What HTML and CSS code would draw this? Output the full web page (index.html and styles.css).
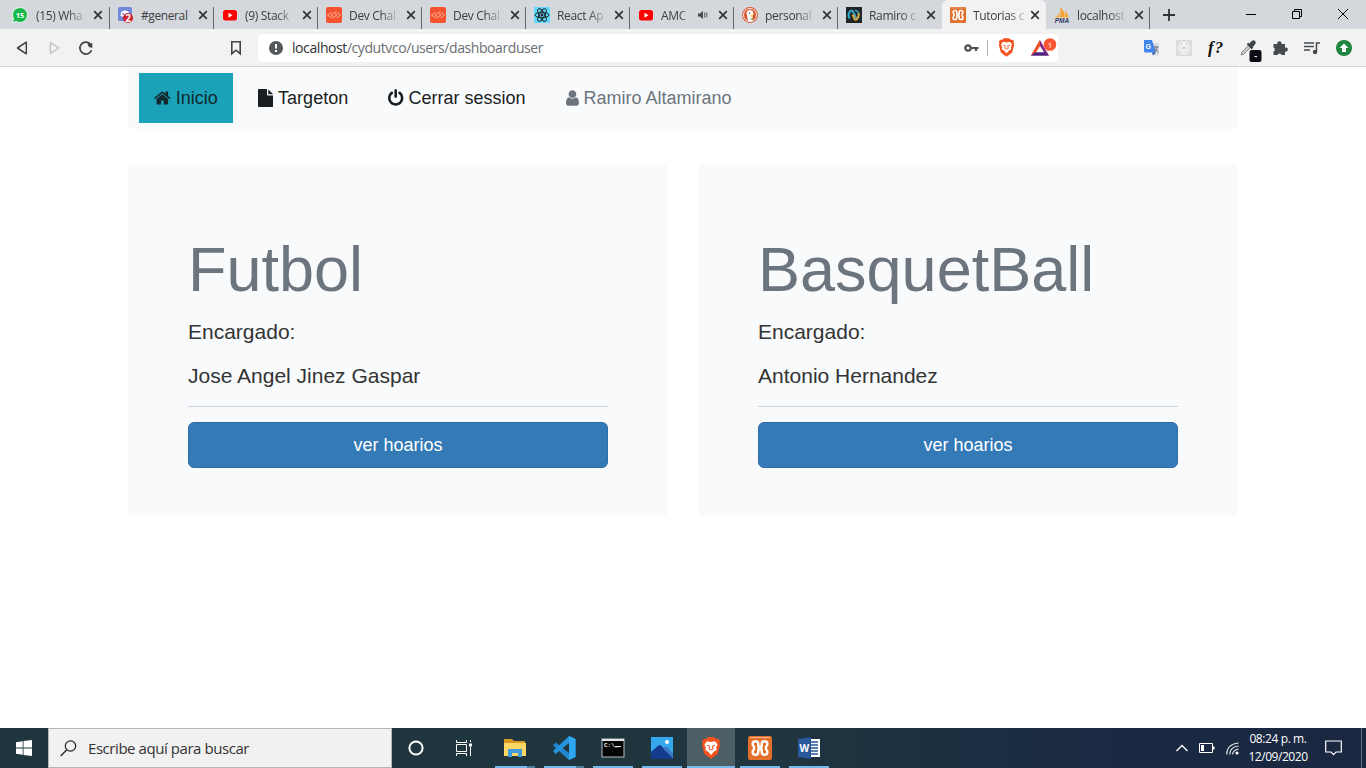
FILE: index.html
```html
<!DOCTYPE html>
<html lang="es">
<head>
<meta charset="utf-8">
<title>Tutorias</title>
<link rel="stylesheet" href="styles.css">
</head>
<body>
<svg class="defs" width="0" height="0">
  <symbol id="x" viewBox="0 0 10 10"><path d="M1.2 1.2l7.6 7.6M8.8 1.2L1.2 8.8" stroke="#303438" stroke-width="1.7" fill="none"/></symbol>
  <symbol id="yt" viewBox="0 0 16 16"><rect x="1" y="3" width="14" height="10.5" rx="2.5" fill="#f00"/><path d="M6.5 5.8v5l4-2.5z" fill="#fff"/></symbol>
  <symbol id="dev" viewBox="0 0 16 16"><rect width="16" height="16" rx="2" fill="#f7522f"/><path d="M5.500 5.200L1.500 8l4 2.800M10.500 5.200l4 2.800-4 2.800M10 4.800L5 8l2 1.300M6 11.200L11 8 9 6.700" stroke="#ffb49e" stroke-width=".9" fill="none"/></symbol>
  <symbol id="xampp" viewBox="0 0 24 24"><rect width="24" height="24" rx="2" fill="#e2702a"/><path d="M2 1.500h20" stroke="#f3b48c"/><path d="M10.300 10.800V8q0-2.700-2.800-2.700Q4.600 5.300 4.600 8q0 1.500 1.400 2.700v2.600q-1.400 1.200-1.400 2.700 0 2.700 2.900 2.700 2.800 0 2.800-2.700v-2.800h3.400V16q0 2.700 2.800 2.700 2.900 0 2.900-2.700 0-1.500-1.400-2.700v-2.600q1.400-1.200 1.400-2.700 0-2.700-2.900-2.700-2.800 0-2.800 2.700v2.800z" fill="none" stroke="#fff" stroke-width="2.400" stroke-linejoin="round"/></symbol>
  <symbol id="brave" viewBox="0 0 20 22"><path d="M5 2L7 0h6l2 2 2-.2L19 4l-.7 2 .7 2-2.400 9L10 22l-6.600-5L1 8l.7-2L1 4l2-2.200z" fill="#f4511e"/><path d="M3.500 7.500L6 4.200l4 .8 4-.8 2.500 3.300-1.300 3.200.4 2.300-2.800 1.700L10 18l-2.800-3.300L4.400 13l.4-2.300z" fill="#fff"/><path d="M5.800 8.300l2.700.7M14.200 8.300l-2.700.7M8.500 9l-.5 3 2 1 2-1-.5-3" stroke="#f4511e" stroke-width="1" fill="none"/></symbol>
</svg>

<header class="tabs">
  <div class="tab first"><svg class="fav" viewBox="0 0 16 16"><path d="M8 .5a7.500 7.500 0 1 1-3.800 14L.5 15.500l1-3.700A7.500 7.500 0 0 1 8 .5z" fill="#16b84a" stroke="#fff" stroke-width=".8"/><text x="8" y="11" class="wa">15</text></svg><span class="label">(15) Wha</span><svg class="close"><use href="#x"/></svg></div>
  <div class="tab"><svg class="fav" viewBox="0 0 16 16"><rect width="14" height="14" rx="1.500" fill="#7289da"/><path d="M2.500 9q0-4 2-5 2.500-.8 5 0 2 1 2 5-3 2-9 0z" fill="#fff"/><circle cx="5.200" cy="7" r="1" fill="#7289da"/><circle cx="10" cy="11" r="5" fill="#d3202c"/><text x="10" y="14.500" class="dc">2</text></svg><span class="label full">#general</span><svg class="close"><use href="#x"/></svg></div>
  <div class="tab"><svg class="fav"><use href="#yt"/></svg><span class="label">(9) Stack</span><svg class="close"><use href="#x"/></svg></div>
  <div class="tab"><svg class="fav"><use href="#dev"/></svg><span class="label">Dev Chal</span><svg class="close"><use href="#x"/></svg></div>
  <div class="tab"><svg class="fav"><use href="#dev"/></svg><span class="label">Dev Chal</span><svg class="close"><use href="#x"/></svg></div>
  <div class="tab"><svg class="fav" viewBox="0 0 16 16"><rect width="16" height="16" rx="1" fill="#61dafb"/><g fill="none" stroke="#20232a"><ellipse cx="8" cy="8" rx="7" ry="2.700"/><ellipse cx="8" cy="8" rx="7" ry="2.700" transform="rotate(60 8 8)"/><ellipse cx="8" cy="8" rx="7" ry="2.700" transform="rotate(120 8 8)"/></g><circle cx="8" cy="8" r="1.400" fill="#20232a"/></svg><span class="label">React Ap</span><svg class="close"><use href="#x"/></svg></div>
  <div class="tab"><svg class="fav"><use href="#yt"/></svg><span class="label short">AMC</span><svg class="sound" viewBox="0 0 10 10"><path d="M0 3.500h2L5 1v8L2 6.500H0z" fill="#454a4e"/><path d="M6.700 2.500v5M8.800 2.500v5" stroke="#454a4e" stroke-width=".9"/></svg><svg class="close"><use href="#x"/></svg></div>
  <div class="tab"><svg class="fav" viewBox="0 0 16 16"><circle cx="8" cy="8" r="7.900" fill="#d9532c"/><circle cx="8" cy="8" r="6.500" fill="none" stroke="#fff" stroke-width=".9"/><path d="M6 14L4.500 6Q5 3 8 3q3.500.5 3.500 4l-1 2 .5 5q-2.500 1-5 0z" fill="#fff"/><path d="M8 8.500l3.500-.8-.5 1.600-2 .5z" fill="#fbb829"/><path d="M8 12l3-1v2.500z" fill="#5fb24a"/><circle cx="7.500" cy="6.200" r=".7" fill="#335"/></svg><span class="label">personal</span><svg class="close"><use href="#x"/></svg></div>
  <div class="tab noline"><svg class="fav" viewBox="0 0 16 16"><rect width="16" height="16" fill="#1e2529"/><path d="M3.500 11.500Q1.500 8 3.500 5 5 2.500 7 4.500l3.500 7" stroke="#35a8c6" stroke-width="2" fill="none"/><path d="M6.500 7.500L8.500 12q1 1.500 2.500 0 2.500-3 1.500-6.500" stroke="#d9a63e" stroke-width="2" fill="none"/><path d="M9 3.500q3 0 3.500 3" stroke="#35a8c6" stroke-width="1.500" fill="none"/></svg><span class="label">Ramiro c</span><svg class="close"><use href="#x"/></svg></div>
  <div class="tab active"><svg class="fav"><use href="#xampp"/></svg><span class="label">Tutorias c</span><svg class="close"><use href="#x"/></svg></div>
  <div class="tab"><svg class="fav" viewBox="0 0 16 16"><path d="M2 10.500Q5 8 5.500 4v6zM6.500 10V0q4 4 4.500 10zM11 3q3 4 3.500 7.500L11.500 10z" fill="#f9a12e"/><path d="M1 10.500h14" stroke="#f5c888"/><text x="8" y="16" class="pma">PMA</text></svg><span class="label">localhost</span><svg class="close"><use href="#x"/></svg></div>
  <svg class="plus" viewBox="0 0 12 12"><path d="M6 0v12M0 6h12" stroke="#303438" stroke-width="1.800"/></svg>
  <div class="winctl">
    <svg viewBox="0 0 12 12"><path d="M1 6.500h10" stroke="#000"/></svg>
    <svg viewBox="0 0 12 12"><path d="M1.500 3.500h7v7h-7zM3.500 3.500v-2h7v7h-2" fill="none" stroke="#000"/></svg>
    <svg viewBox="0 0 12 12"><path d="M1 1l10 10M11 1L1 11" stroke="#000"/></svg>
  </div>
</header>

<div class="toolbar">
  <div class="navbtns">
    <svg viewBox="0 0 16 16"><path d="M12.300 2.200v11.600L3.500 8z" fill="none" stroke="#3f4347" stroke-width="1.500" stroke-linejoin="round"/></svg>
    <svg viewBox="0 0 16 16"><path d="M4.500 2.500v11L12.800 8z" fill="none" stroke="#bcbfc2" stroke-width="1.300" stroke-linejoin="round"/></svg>
    <svg viewBox="0 0 16 16"><path d="M13.500 10.300A6 6 0 1 1 12 3.700" fill="none" stroke="#3f4347" stroke-width="1.700"/><path d="M9.500 3.200h4.800v4.600q-4.500 0-4.800-4.600z" fill="#3f4347"/></svg>
  </div>
  <svg class="bookmark" viewBox="0 0 12 16"><path d="M1.800 1.700h8.400v12L6 10.200l-4.200 3.500z" fill="none" stroke="#3f4347" stroke-width="1.600"/></svg>
  <div class="address">
    <svg class="info" viewBox="0 0 14 14"><circle cx="7" cy="7" r="7" fill="#55585c"/><path d="M7 3v4.500M7 9v2" stroke="#fff" stroke-width="2"/></svg>
    <span class="url"><b>localhost</b>/cydutvco/users/dashboarduser</span>
    <svg class="key" viewBox="0 0 15 10"><circle cx="4" cy="5" r="2.700" fill="none" stroke="#4c5054" stroke-width="2.200"/><path d="M7 5h7.500M12 5v3" stroke="#4c5054" stroke-width="2.200"/></svg>
    <i class="vline"></i>
    <svg class="shield"><use href="#brave"/></svg>
    <svg class="bat" viewBox="0 0 26 20"><path d="M9 2l9 15.500H0z" fill="#8a2c82"/><path d="M9 2L0 17.500l5-3L9 8z" fill="#f4511e"/><path d="M0 17.500h18L13 14H5z" fill="#4b2484"/><path d="M9 8l4 6.200H5z" fill="#fff"/><circle cx="19" cy="6.500" r="6.300" fill="#fb5430"/><text x="19" y="9.500" class="one">1</text></svg>
  </div>
  <div class="ext">
    <svg viewBox="0 0 16 16"><path d="M7 3h8v12.500H9z" fill="#d9dcdf"/><path d="M0 0h8l4 12.500H1.500Q0 12.500 0 11z" fill="#4285e8"/><path d="M8 12.500h4l-3 3z" fill="#2d58b8"/><text x="1.500" y="9" class="gt">G</text><path d="M9.500 7h5M12 6v1M13.500 7q-1 4-3.500 5M11 8.500l3.500 4" stroke="#697580" fill="none"/></svg>
    <svg viewBox="0 0 16 16"><rect width="16" height="16" fill="#dcdddd"/><g fill="none" stroke="#f7f7f7"><ellipse cx="8" cy="8" rx="6.500" ry="2.600"/><ellipse cx="8" cy="8" rx="6.500" ry="2.600" transform="rotate(60 8 8)"/><ellipse cx="8" cy="8" rx="6.500" ry="2.600" transform="rotate(120 8 8)"/></g></svg>
    <span class="fq">f?</span>
    <svg viewBox="0 0 16 16"><path d="M1 15l1-3 7-7 2 2-7 7z" fill="#c6c8ca" stroke="#777" stroke-width=".8"/><path d="M7.500 3.500l5 5" stroke="#3f4347" stroke-width="2.400"/><path d="M9.500 4.500L12 1.800q1.500-1.300 2.500-.3 1.300 1.200-.3 2.700L11.800 6.800z" fill="#3f4347" stroke="#3f4347" stroke-width="1.500"/><rect x="9.500" y="10" width="12" height="12" rx="2" fill="#0c0c16"/><path d="M14.500 16.500h2.500" stroke="#fff"/></svg>
    <svg viewBox="0 0 16 16"><path d="M2 4h3.300a2.200 2.200 0 1 1 4.200 0H13v3.500a2.200 2.200 0 1 1 0 4.200V15H9.700a2.200 2.200 0 0 0-4.200 0H1.500v-3.600a2.200 2.200 0 0 0 0-4V4z" fill="#454a4e"/></svg>
    <svg viewBox="0 0 16 16"><path d="M0 3h10M0 6.500h10M0 10h6M12.500 12V3H16" stroke="#454a4e" stroke-width="1.500" fill="none"/><circle cx="11" cy="12" r="2.200" fill="#454a4e"/></svg>
    <svg viewBox="0 0 16 16"><circle cx="8" cy="8" r="8" fill="#1e8541"/><path d="M8 3.500L12.500 8H10v4H6V8H3.500z" fill="#fff"/></svg>
  </div>
</div>

<main class="page">
  <nav class="menu">
    <a class="item on"><svg class="i-home" viewBox="64 0 1664 1792"><path d="M1472 992v480q0 26-19 45t-45 19h-384v-384h-256v384h-384q-26 0-45-19t-19-45v-480q0-1 .5-3t.5-3l575-474 575 474q1 2 1 6zm223-69l-62 74q-8 9-21 11h-3q-13 0-21-7l-692-577-692 577q-12 8-24 7-13-2-21-11l-62-74q-8-10-7-23.500t11-21.500l719-599q32-26 76-26t76 26l244 204v-195q0-14 9-23t23-9h192q14 0 23 9t9 23v408l219 182q10 8 11 21.500t-7 23.500z"/></svg>Inicio</a>
    <a class="item"><svg class="i-file" viewBox="128 0 1536 1792"><path d="M1152 512v-472q22 14 36 28l408 408q14 14 28 36h-472zm-128 32q0 40 28 68t68 28h544v1056q0 40-28 68t-68 28h-1344q-40 0-68-28t-28-68v-1600q0-40 28-68t68-28h800v544z"/></svg>Targeton</a>
    <a class="item"><svg class="i-file" viewBox="128 0 1536 1792"><path d="M1664 896q0 156-61 298t-164 245-245 164-298 61-298-61-245-164-164-245-61-298q0-182 80.500-343t226.500-270q43-32 95.500-25t83.500 50q32 42 24.500 94.500t-49.500 84.500q-98 74-151.500 181t-53.500 228q0 104 40.500 198.500t109.500 163.500 163.500 109.500 198.500 40.500 198.500-40.500 163.500-109.500 109.500-163.500 40.500-198.500q0-121-53.500-228t-151.500-181q-42-32-49.500-84.500t24.500-94.500q31-43 84-50t95 25q146 109 226.500 270t80.500 343zm-640-768v640q0 52-38 90t-90 38-90-38-38-90v-640q0-52 38-90t90-38 90 38 38 90z"/></svg>Cerrar session</a>
    <a class="item muted"><svg class="i-user" viewBox="256 0 1280 1792"><path d="M1536 1399q0 109-62.500 187t-150.500 78h-854q-88 0-150.500-78t-62.500-187q0-85 8.500-160.500t31.500-152 58.500-131 94-89 134.500-34.500q131 128 313 128t313-128q76 0 134.500 34.500t94 89 58.500 131 31.500 152 8.500 160.500zm-256-887q0 159-112.500 271.500t-271.500 112.500-271.500-112.500-112.500-271.500 112.500-271.500 271.500-112.500 271.500 112.500 112.500 271.500z"/></svg>Ramiro Altamirano</a>
  </nav>
  <section class="cards">
    <article class="card"><h1>Futbol</h1><p>Encargado:</p><p>Jose Angel Jinez Gaspar</p><hr><a class="btn">ver hoarios</a></article>
    <article class="card"><h1>BasquetBall</h1><p>Encargado:</p><p>Antonio Hernandez</p><hr><a class="btn">ver hoarios</a></article>
  </section>
</main>

<footer class="taskbar">
  <div class="cell"><svg width="16" height="16" viewBox="0 0 16 16"><path d="M0 2.200l6.700-1v6.400H0zM7.500 1.100L16 0v7.600H7.500zM0 8.400h6.700v6.400L0 13.800zM7.500 8.400H16V16l-8.500-1.100z" fill="#fff"/></svg></div>
  <div class="search"><svg width="17" height="17" viewBox="0 0 17 17"><circle cx="10.500" cy="6" r="5.200" fill="none" stroke="#222" stroke-width="1.200"/><path d="M6.800 9.700L.7 16" stroke="#222" stroke-width="1.300"/></svg><span>Escribe aquí para buscar</span></div>
  <div class="cell"><svg width="16" height="16" viewBox="0 0 16 16"><circle cx="8" cy="8" r="6.600" fill="none" stroke="#fff" stroke-width="2"/></svg></div>
  <div class="cell"><svg width="16" height="16" viewBox="0 0 16 16"><path d="M.5 0v2.500h10V0M.5 4.500h10v7H.5zM.5 16v-2.500h10V16M14.500 0v2M14.500 7v9" fill="none" stroke="#fff"/><path d="M13 3.500h3v3h-3z" fill="#fff"/></svg></div>
  <div class="apps">
    <div class="app multi"><svg viewBox="0 0 24 24"><path d="M1 3h8l2 2h11v4H1z" fill="#d99a22"/><path d="M1 7h22v13H1z" fill="#ffd766"/><path d="M5 21v-8h14v8h-4v-4H9v4z" fill="#3f9bdc"/></svg></div>
    <div class="app multi"><svg viewBox="0 0 24 24"><path d="M17 0l6.500 3v18L17 24 1 9.500 3.500 6.500 17 17z" fill="#1f88d0"/><path d="M17 0v7L3.500 18 1 15z" fill="#2694de"/><path d="M17 0l6.500 3v18L17 24z" fill="#2fa8f0"/></svg></div>
    <div class="app"><svg viewBox="0 0 24 24"><rect x="1" y="3" width="22" height="18" fill="#050505" stroke="#b8bec0"/><path d="M1 4h22" stroke="#e4e6e8" stroke-width="2"/><text x="3" y="11" class="cmd">C:\_</text><path d="M14 10.500h6" stroke="#ddd"/></svg></div>
    <div class="app"><svg viewBox="0 0 24 24"><rect x="1" y="1" width="22" height="22" fill="#35a7ec"/><path d="M1 16L8.500 9.500q1.500-1 3 .5L23 22v1H1z" fill="#153c8c"/><path d="M13 12.500l2-1.500q1-.6 2 .3l6 6.200v5z" fill="#3b76c8"/><circle cx="17" cy="6" r="2" fill="#fff"/></svg></div>
    <div class="app current"><svg viewBox="0 0 24 24"><use href="#brave" x="2" y="0" width="20" height="24"/></svg></div>
    <div class="app"><svg><use href="#xampp"/></svg></div>
    <div class="app"><svg viewBox="0 0 24 24"><path d="M12 3h11v18H12z" fill="#fff"/><path d="M13 6h8M13 9h8M13 12h8M13 15h8M13 18h8" stroke="#2a569a" stroke-width="1.300"/><path d="M1 3l13-2v22L1 21z" fill="#2a569a"/><text x="2.500" y="16" class="w">W</text></svg></div>
  </div>
  <div class="tray">
    <svg width="12" height="8" viewBox="0 0 12 8"><path d="M.5 7L6 1.500 11.500 7" fill="none" stroke="#fff" stroke-width="1.300"/></svg>
    <svg width="16" height="10" viewBox="0 0 16 10"><path d="M.5.500h13v9H.5z" fill="none" stroke="#fff"/><path d="M2 2h3v6H2zM14 3.500h1.500v3H14z" fill="#fff"/></svg>
    <svg width="13" height="13" viewBox="0 0 13 13"><path d="M.7 12.500Q1 2 12.500 1M3.700 12.500Q4 5 12.500 4M6.500 12.500Q7 8 12.500 7" fill="none" stroke="#e6ebee" stroke-width="1.100"/><circle cx="11" cy="11" r="1.600" fill="#fff"/></svg>
    <div class="clock"><span class="time">08:24 p. m.</span><span class="date">12/09/2020</span></div>
    <svg class="note" width="17" height="16" viewBox="0 0 17 16"><path d="M.7 1h15.600v11H11l-2.500 2.700L6 12H.7z" fill="none" stroke="#fff" stroke-width="1.200"/></svg>
    <i class="peek"></i>
  </div>
</footer>
</body>
</html>
```
FILE: styles.css
```css
* { box-sizing: border-box; }
body { margin: 0; width: 1366px; height: 768px; overflow: hidden; display: flex; flex-direction: column; background: #fff; font-family: "Liberation Sans", Arial, sans-serif; }
svg { display: block; flex: none; }
.defs { position: absolute; }

.tabs { display: flex; flex: none; height: 29px; padding-left: 5px; background: #d4d8dc; font: 12px "Open Sans", sans-serif; color: #3c4043; }
.tab { display: flex; align-items: center; width: 104px; height: 29px; padding: 1px 0 0 7px; background: linear-gradient(#63686c, #63686c) right 7px / 1px 22px no-repeat; }
.tab.first { width: 105px; }
.tab + .tab { padding-left: 8px; }
.tab.noline { background: none; }
.tab.active { background: #f2f2f2; border-radius: 6px 6px 0 0; }
.fav { width: 16px; height: 16px; }
.label { width: 49px; margin-left: 8px; overflow: hidden; white-space: nowrap; letter-spacing: -.32px; -webkit-mask-image: linear-gradient(90deg, #000 65%, rgba(0,0,0,.1) 100%); mask-image: linear-gradient(90deg, #000 65%, rgba(0,0,0,.1) 100%); }
.tab + .tab .label { margin-left: 7px; }
.label.full { letter-spacing: -.4px; -webkit-mask-image: none; mask-image: none; }
.tab.active .label { width: 54px; letter-spacing: -.35px; }
.tab.active .close { margin-left: 3px; }
.tab .label.short { width: 29px; }
.sound { width: 10px; height: 10px; margin: 0 2px 0 8px; }
.close { width: 10px; height: 10px; margin-left: 8px; }
.plus { width: 12px; height: 12px; margin: 9px 0 0 13px; }
.winctl { display: flex; gap: 34px; margin: 8px 0 0 70px; }
.winctl svg { width: 12px; height: 12px; }

.toolbar { display: flex; flex: none; align-items: center; height: 38px; background: #f2f2f2; border-bottom: 1px solid #d2d5d8; }
.navbtns { display: flex; gap: 16px; padding-left: 14px; }
.navbtns svg { width: 16px; height: 16px; }
.bookmark { width: 12px; height: 16px; margin-left: 136px; }
.address { display: flex; align-items: center; width: 800px; height: 28px; margin-left: 16px; padding-left: 11px; background: #fff; border-radius: 4px; }
.info { width: 14px; height: 14px; }
.url { width: 672px; margin-left: 9px; font: 14px/20px "Open Sans", sans-serif; letter-spacing: -.42px; color: #6a6e72; }
.url b { font-weight: 400; color: #303336; }
.key { width: 15px; height: 10px; }
.vline { width: 1px; height: 16px; margin-left: 8px; background: #b5b8ba; }
.shield { width: 17px; height: 19px; margin-left: 10px; }
.bat { width: 26px; height: 20px; margin-left: 16px; }
.ext { display: flex; align-items: center; margin-left: 78px; }
.ext > * { width: 16px; height: 16px; margin: 0 8px; overflow: visible; }
.fq { font: italic bold 17px/15px "Liberation Serif", serif; letter-spacing: 1px; color: #111; }
.wa { font: bold 7.500px "Open Sans", sans-serif; fill: #fff; text-anchor: middle; }
.dc { font: bold 10px "Open Sans", sans-serif; fill: #fff; text-anchor: middle; }
.pma { font: italic bold 6.500px "Liberation Sans", sans-serif; fill: #34406f; text-anchor: middle; }
.one { font: 8px "Open Sans", sans-serif; fill: #fff; text-anchor: middle; }
.gt { font: bold 7px "Liberation Sans", sans-serif; fill: #fff; }
.cmd { font: bold 6px "Liberation Mono", monospace; fill: #eee; }
.w { font: bold 10px "Open Sans", sans-serif; fill: #fff; }

.page { flex: 1; padding: 0 128px; }
.menu { display: flex; gap: 10px; height: 62px; padding: 6px 11px; background: #f8fafc; border-radius: 0 0 4px 4px; font-size: 18px; line-height: 50px; color: #1b1e21; }
.item { display: flex; align-items: center; height: 50px; padding: 0 15px; white-space: nowrap; }
.item svg { height: 18px; margin-right: 5px; fill: currentColor; }
.item.on { background: #1aa2b8; color: #14292e; }
.item.muted { color: #6c757d; }
.i-home { width: 16.700px; }
.i-file { width: 15.400px; }
.i-user { width: 12.900px; }
.cards { display: grid; grid-template-columns: 1fr 1fr; gap: 30px; margin-top: 35px; }
.card { height: 352px; padding: 71px 60px 48px; background: #f8fafc; border-radius: 6px; }
.card h1 { margin: 0 0 13px; font-size: 63px; font-weight: 400; line-height: 69px; color: #6c757d; }
.card p { margin: 0 0 15px; font-size: 21px; line-height: 29px; color: #333; }
.card hr { margin: 0 0 15px; padding-top: 1px; border: 0; border-bottom: 1px solid #d0d4d8; }
.btn { display: block; height: 46px; border: 1px solid #2e6da4; border-radius: 6px; background: #337ab7; color: #fff; font-size: 18px; line-height: 44px; text-align: center; }

.taskbar { display: flex; flex: none; height: 40px; background: linear-gradient(90deg, #20363f 0%, #20363f 55%, #1a2a42 80%, #1a2741 100%); font-family: "Open Sans", sans-serif; }
.cell { display: flex; align-items: center; justify-content: center; width: 48px; }
.search { display: flex; align-items: center; width: 344px; padding-left: 11px; background: #f1f1f1; border: 1px solid #b4b7b9; font-size: 15px; color: #333; }
.search span { margin-left: 11px; letter-spacing: -.44px; white-space: nowrap; }
.apps { display: flex; gap: 1px; margin-left: 3px; }
.app { display: flex; align-items: center; justify-content: center; width: 48px; background: linear-gradient(#76b9ed, #76b9ed) 4px 38px / 40px 2px no-repeat; }
.app.multi { background: linear-gradient(90deg, #76b9ed 32px, #4f7f9f 32px) 4px 38px / 40px 2px no-repeat; }
.app.current { background: linear-gradient(#76b9ed, #76b9ed) 0 38px / 48px 2px no-repeat #4c5e66; }
.app svg { width: 24px; height: 24px; }
.tray { display: flex; align-items: center; margin-left: auto; padding-right: 0; color: #fff; }
.tray svg + svg { margin-left: 11px; }
.clock { display: flex; flex-direction: column; width: 62px; margin: -1px 0 0 8px; align-items: center; font-size: 12px; line-height: 18px; white-space: nowrap; }
.time { letter-spacing: -.4px; }
.date { letter-spacing: -.45px; }
.note { margin-left: 16px; }
.peek { width: 1px; height: 40px; margin: 0 4px 0 19px; background: #66717f; }
```
